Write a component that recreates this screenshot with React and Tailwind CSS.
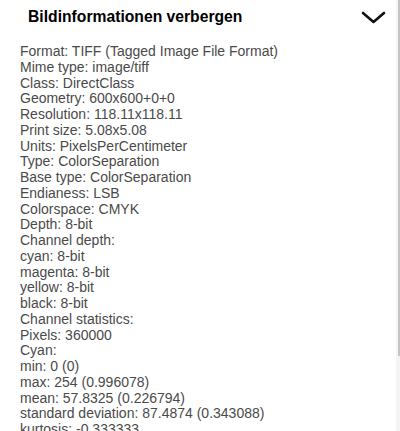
import React from 'react';

const lines = [
  'Format: TIFF (Tagged Image File Format)',
  'Mime type: image/tiff',
  'Class: DirectClass',
  'Geometry: 600x600+0+0',
  'Resolution: 118.11x118.11',
  'Print size: 5.08x5.08',
  'Units: PixelsPerCentimeter',
  'Type: ColorSeparation',
  'Base type: ColorSeparation',
  'Endianess: LSB',
  'Colorspace: CMYK',
  'Depth: 8-bit',
  'Channel depth:',
  'cyan: 8-bit',
  'magenta: 8-bit',
  'yellow: 8-bit',
  'black: 8-bit',
  'Channel statistics:',
  'Pixels: 360000',
  'Cyan:',
  'min: 0 (0)',
  'max: 254 (0.996078)',
  'mean: 57.8325 (0.226794)',
  'standard deviation: 87.4874 (0.343088)',
  'kurtosis: -0.333333',
];

export default function App() {
  return (
    <div className="flex h-[431px] w-[400px] overflow-hidden bg-white" style={{ fontFamily: '"Liberation Sans", Arial, sans-serif' }}>
      <div className="flex-1 overflow-hidden">
        {/* header */}
        <div className="flex h-[34px] items-center justify-between pl-[28px] pr-[10px]">
          <span className="text-[15.7px] font-bold text-black">Bildinformationen verbergen</span>
          <svg width="25" height="13" viewBox="0 0 25 13" fill="none" className="mt-[1px]">
            <path d="M2 2 L12.5 11 L23 2" stroke="#111" strokeWidth="2.6" strokeLinecap="round" strokeLinejoin="round" />
          </svg>
        </div>
        <div className="pl-[20px] pt-[10px] text-[14px] leading-[15.75px] text-[#4a4a4a]">
          {lines.map((l, i) => (
            <div key={i} className="whitespace-nowrap">{l}</div>
          ))}
        </div>
      </div>
      {/* thin scrollbar */}
      <div className="flex w-[4px] flex-col items-end bg-[#f4f4f4]">
        <div className="h-[356px] w-[2px] bg-[#c4c4c4]" />
      </div>
    </div>
  );
}
